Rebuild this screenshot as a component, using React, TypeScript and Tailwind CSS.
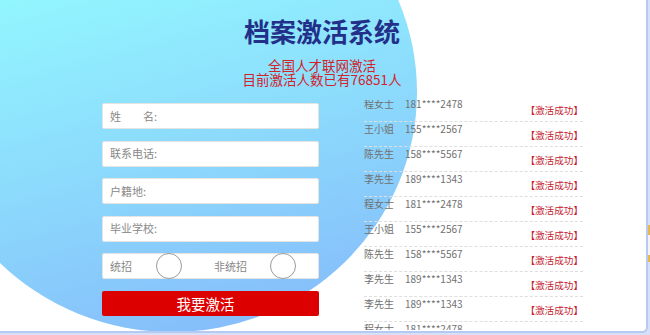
import React from "react";

const rows = [
  ["程女士", "181****2478"],
  ["王小姐", "155****2567"],
  ["陈先生", "158****5567"],
  ["李先生", "189****1343"],
  ["程女士", "181****2478"],
  ["王小姐", "155****2567"],
  ["陈先生", "158****5567"],
  ["李先生", "189****1343"],
  ["李先生", "189****1343"],
  ["程女士", "181****2478"],
];

const fields = ["姓\u3000\u3000名:", "联系电话:", "户籍地:", "毕业学校:"];

export default function App() {
  return (
    <div
      className="flex w-[650px] h-[335px] bg-[#d6e1f8] overflow-hidden"
      style={{ fontFamily: '"Noto Sans CJK SC", "Noto Sans", sans-serif' }}
    >
      <div className="relative w-[648px] h-[333px] shrink-0 bg-white border-r-2 border-b-2 border-[#b6c9f2] rounded-br-[6px] overflow-hidden">
        {/* decorative gradient blob */}
        <div className="absolute left-[-73px] top-[-148px] w-[490px] h-[480px] rounded-[50%] bg-[linear-gradient(165deg,#92f6fe_28%,#84b6fa_100%)]" />

        <div className="relative flex flex-col">
          <div className="flex flex-col items-center pt-[16px] pr-[2px]">
            <h1 className="text-[26px] leading-[30px] font-bold text-[#23308a]">档案激活系统</h1>
            <div className="mt-[13px] flex flex-col items-center text-[13.5px] leading-[13.5px] text-[#d2222b]">
              <span>全国人才联网激活</span>
              <span>目前激活人数已有76851人</span>
            </div>
          </div>

          <div className="mt-[14px] flex">
            <div className="ml-[102px] w-[217px] pt-[3px] flex flex-col gap-[11.5px]">
              {fields.map((f) => (
                <div
                  key={f}
                  className="h-[26px] bg-white border border-[#e4e4e4] rounded-[2px] flex items-center pl-[7px] text-[11px] text-[#888]"
                >
                  {f}
                </div>
              ))}
              <div className="h-[26px] bg-white border border-[#e4e4e4] rounded-[2px] flex items-center pl-[7px] text-[11px] text-[#888]">
                <span className="w-[46px]">统招</span>
                <span className="w-[26px] h-[26px] rounded-full border border-[#9a9a9a] bg-white shrink-0" />
                <span className="ml-[32px] w-[56px]">非统招</span>
                <span className="w-[26px] h-[26px] rounded-full border border-[#9a9a9a] bg-white shrink-0" />
              </div>
              <button className="h-[25px] bg-[#dd0000] rounded-[2px] text-white text-[14.5px] leading-[25px] flex items-center justify-center pr-[10px]">
                我要激活
              </button>
            </div>

            <div className="ml-[45px] w-[219px] h-[230px] overflow-hidden">
              <div className="mt-[-3px]">
                {rows.map(([n, p], i) => (
                  <div
                    key={i}
                    className="h-[25px] flex items-start border-b border-dashed border-[#dedede] text-[#707070]"
                  >
                    <span className="w-[41px] pt-[2px] text-[10px] leading-[10px]">{n}</span>
                    <span className="flex-1 pt-[2px] text-[10px] leading-[10px]">{p}</span>
                    <span className="mr-[0px] pt-[8px] text-[9.6px] leading-[10px] text-[#c41a2e]">【激活成功】</span>
                  </div>
                ))}
              </div>
            </div>
          </div>
        </div>
      </div>
      <div className="flex flex-col w-[2px] pt-[225px]">
        <div className="h-[10px] bg-[#e6b94c]" />
        <div className="h-[20px] bg-[#f3f3f3]" />
        <div className="h-[7px] bg-[#e6b94c]" />
      </div>
    </div>
  );
}
